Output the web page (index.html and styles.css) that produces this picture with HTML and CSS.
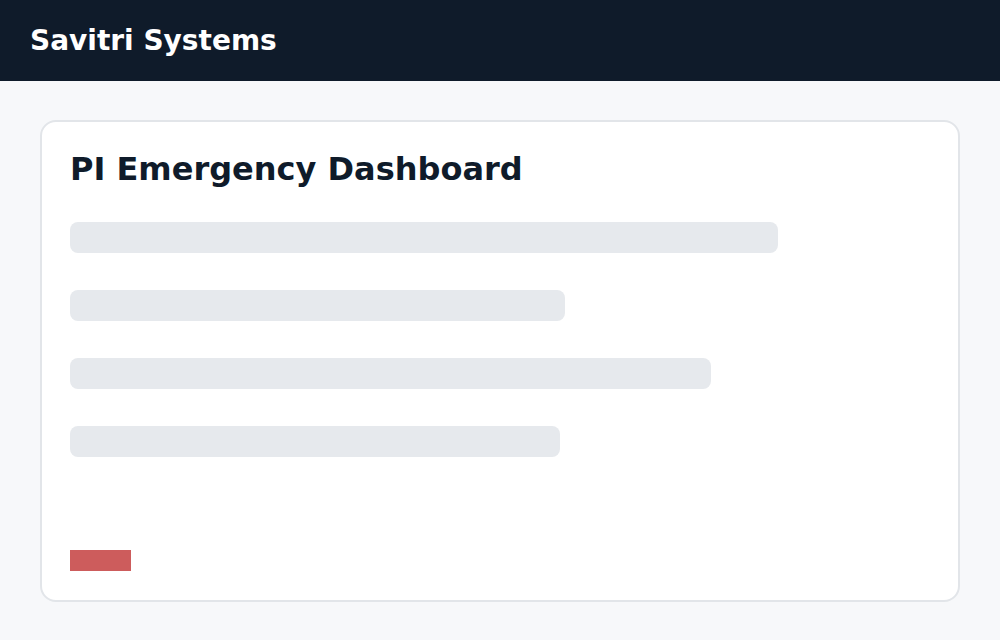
FILE: index.html
```html
<!DOCTYPE html>
<html lang="en">
<head>
    <meta charset="UTF-8">
    <meta name="viewport" content="width=device-width, initial-scale=1.0">
    <title>PI Emergency Dashboard</title>
    <link rel="stylesheet" href="styles.css">
</head>
<body>
    <header class="topbar">
        <div class="brand">Savitri Systems</div>
    </header>

    <main class="content">
        <section class="card">
            <h1>PI Emergency Dashboard</h1>
            <div class="skeleton">
                <div class="line line-1"></div>
                <div class="line line-2"></div>
                <div class="line line-3"></div>
                <div class="line line-4"></div>
            </div>
            <div class="alert-bar"></div>
        </section>
    </main>
</body>
</html>
```

FILE: styles.css
```css
body {
    font-family: "DejaVu Sans", sans-serif;
    background-color: #f7f8fa;
    margin: 0;
}

.topbar {
    background-color: #0f1b2a;
    height: 81px;
    display: flex;
    align-items: center;
    padding: 0 30px;
}

.brand {
    color: #ffffff;
    font-size: 28px;
    font-weight: bold;
}

.content {
    padding: 39px 40px;
}

.card {
    background-color: #ffffff;
    border: 2px solid #e2e5e9;
    border-radius: 16px;
    padding: 28px 28px 29px;
    height: 421px;
    display: flex;
    flex-direction: column;
}

h1 {
    color: #0f1b2a;
    font-size: 32px;
    margin: 0 0 34px;
}

.skeleton {
    display: flex;
    flex-direction: column;
    gap: 37px;
}

.line {
    height: 31px;
    border-radius: 8px;
    background-color: #e6e9ed;
}

.line-1 { width: 708px; }
.line-2 { width: 495px; }
.line-3 { width: 641px; }
.line-4 { width: 490px; }

.alert-bar {
    margin-top: auto;
    width: 61px;
    height: 21px;
    background-color: #cd5c5c;
}
```
